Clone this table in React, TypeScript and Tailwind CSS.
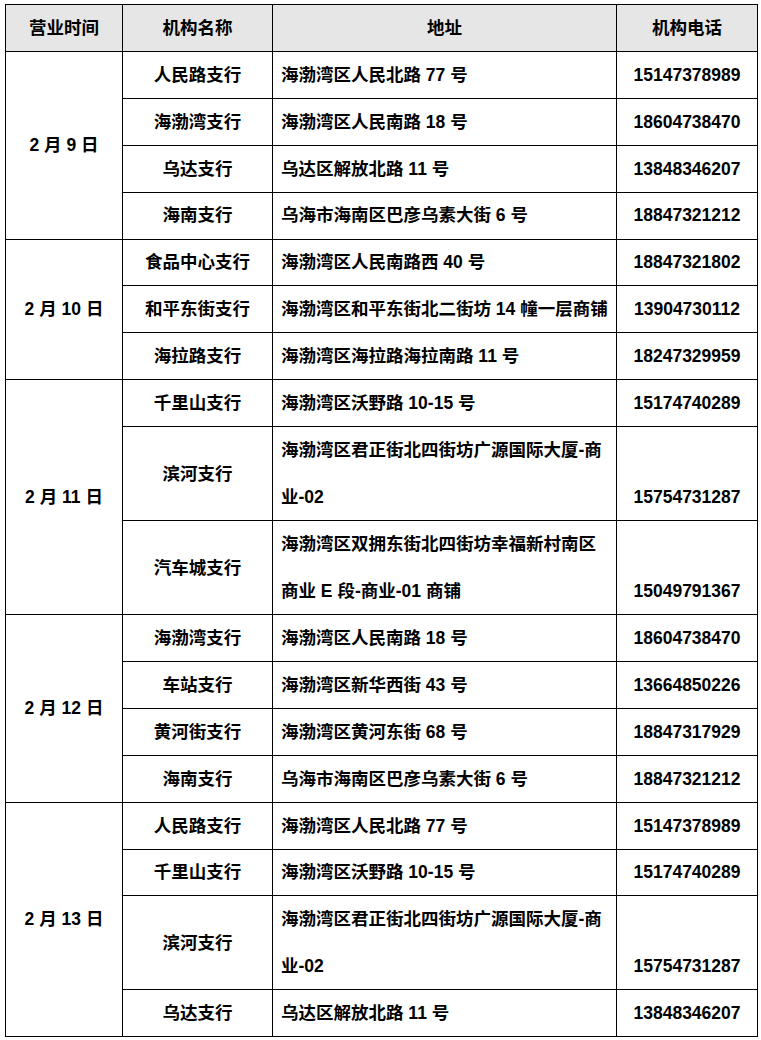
const GROUPS: { date: string; rows: { name: string; addr: string[]; phone: string }[] }[] = [
  {
    date: '2 月 9 日',
    rows: [
      { name: '人民路支行', addr: ['海渤湾区人民北路 77 号'], phone: '15147378989' },
      { name: '海渤湾支行', addr: ['海渤湾区人民南路 18 号'], phone: '18604738470' },
      { name: '乌达支行', addr: ['乌达区解放北路 11 号'], phone: '13848346207' },
      { name: '海南支行', addr: ['乌海市海南区巴彦乌素大街 6 号'], phone: '18847321212' },
    ],
  },
  {
    date: '2 月 10 日',
    rows: [
      { name: '食品中心支行', addr: ['海渤湾区人民南路西 40 号'], phone: '18847321802' },
      { name: '和平东街支行', addr: ['海渤湾区和平东街北二街坊 14 幢一层商铺'], phone: '13904730112' },
      { name: '海拉路支行', addr: ['海渤湾区海拉路海拉南路 11 号'], phone: '18247329959' },
    ],
  },
  {
    date: '2 月 11 日',
    rows: [
      { name: '千里山支行', addr: ['海渤湾区沃野路 10-15 号'], phone: '15174740289' },
      { name: '滨河支行', addr: ['海渤湾区君正街北四街坊广源国际大厦-商', '业-02'], phone: '15754731287' },
      { name: '汽车城支行', addr: ['海渤湾区双拥东街北四街坊幸福新村南区', '商业 E 段-商业-01 商铺'], phone: '15049791367' },
    ],
  },
  {
    date: '2 月 12 日',
    rows: [
      { name: '海渤湾支行', addr: ['海渤湾区人民南路 18 号'], phone: '18604738470' },
      { name: '车站支行', addr: ['海渤湾区新华西街 43 号'], phone: '13664850226' },
      { name: '黄河街支行', addr: ['海渤湾区黄河东街 68 号'], phone: '18847317929' },
      { name: '海南支行', addr: ['乌海市海南区巴彦乌素大街 6 号'], phone: '18847321212' },
    ],
  },
  {
    date: '2 月 13 日',
    rows: [
      { name: '人民路支行', addr: ['海渤湾区人民北路 77 号'], phone: '15147378989' },
      { name: '千里山支行', addr: ['海渤湾区沃野路 10-15 号'], phone: '15174740289' },
      { name: '滨河支行', addr: ['海渤湾区君正街北四街坊广源国际大厦-商', '业-02'], phone: '15754731287' },
      { name: '乌达支行', addr: ['乌达区解放北路 11 号'], phone: '13848346207' },
    ],
  },
];

const cell = 'border border-black p-0';

export default function App() {
  return (
    <div
      className="min-h-[1040px] w-[761px] bg-white pl-[5px] pt-[4px] text-[17.5px] font-bold text-black"
      style={{ fontFamily: '"Liberation Sans", "Noto Sans CJK SC", sans-serif' }}
    >
      <table className="w-[752px] table-fixed border-collapse">
        <colgroup>
          <col className="w-[117px]" />
          <col className="w-[150px]" />
          <col className="w-[344px]" />
          <col className="w-[141px]" />
        </colgroup>
        <thead>
          <tr className="h-[47px] bg-[#e6e6e6]">
            <th className={`${cell} text-center font-bold`}>营业时间</th>
            <th className={`${cell} text-center font-bold`}>机构名称</th>
            <th className={`${cell} text-center font-bold`}>地址</th>
            <th className={`${cell} text-center font-bold`}>机构电话</th>
          </tr>
        </thead>
        <tbody>
          {GROUPS.map((g) =>
            g.rows.map((r, i) => {
              const tall = r.addr.length > 1;
              return (
                <tr key={g.date + r.name + i} className={tall ? 'h-[92.9px]' : 'h-[46.9px]'}>
                  {i === 0 && (
                    <td rowSpan={g.rows.length} className={`${cell} text-center align-middle`}>
                      {g.date}
                    </td>
                  )}
                  <td className={`${cell} text-center align-middle`}>{r.name}</td>
                  <td className={`${cell} pl-[8px] align-middle`}>
                    {r.addr.map((line) => (
                      <div key={line} className={tall ? 'leading-[46.5px]' : ''}>
                        {line}
                      </div>
                    ))}
                  </td>
                  <td className={`${cell} text-center ${tall ? 'align-bottom leading-[46.5px]' : 'align-middle'}`}>
                    {r.phone}
                  </td>
                </tr>
              );
            }),
          )}
        </tbody>
      </table>
    </div>
  );
}
